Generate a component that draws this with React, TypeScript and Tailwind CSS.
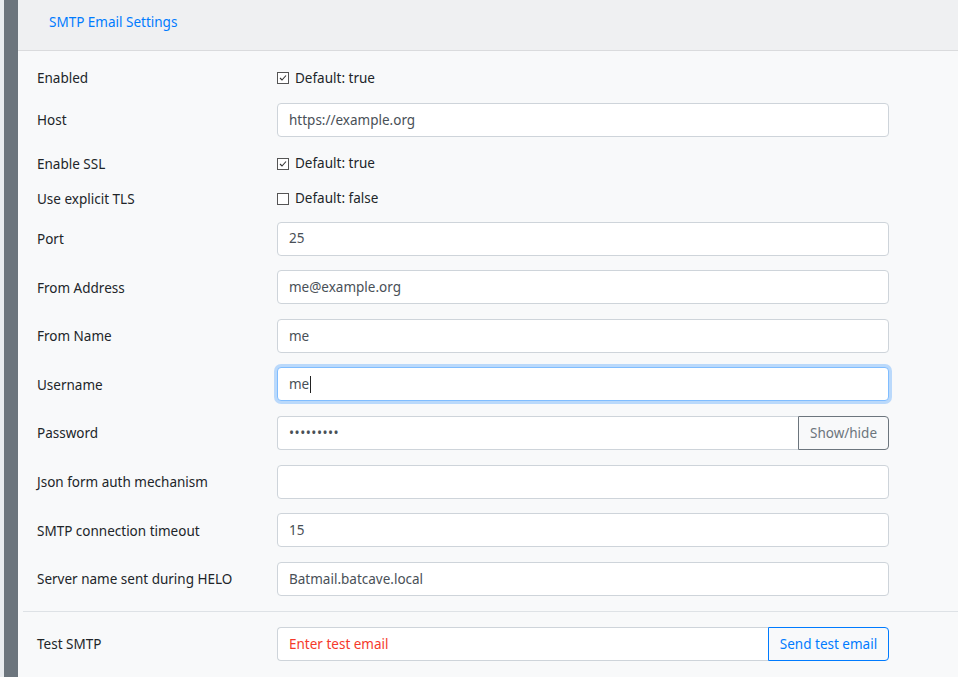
import React from "react";

const font = { fontFamily: '"Segoe UI", "Noto Sans", "Open Sans", sans-serif' };

function Check({ checked }: { checked: boolean }) {
  return (
    <span className="inline-flex h-[12px] w-[12px] items-center justify-center border border-[#555] bg-white">
      {checked && (
        <svg width="8" height="8" viewBox="0 0 8 8">
          <path d="M1 4 L3 6 L7 1.5" fill="none" stroke="#333" strokeWidth="1.1" />
        </svg>
      )}
    </span>
  );
}

function CheckRow({ label, checked, text, mb }: { label: string; checked: boolean; text: string; mb: string }) {
  return (
    <div className={`flex h-[24px] items-center ${mb}`}>
      <div className="w-[254px] pl-[14px] pt-[1px] text-[13.5px] text-[#212529]">{label}</div>
      <div className="flex items-center gap-[6px] text-[13.5px] text-[#212529]">
        <Check checked={checked} />
        <span>{text}</span>
      </div>
    </div>
  );
}

function InputRow({ label, value, focused }: { label: string; value: string; focused?: boolean }) {
  return (
    <div className="mb-[14.6px] flex h-[34px] items-center">
      <div className="w-[254px] pl-[14px] pt-[1px] text-[13.5px] text-[#212529]">{label}</div>
      <div
        className={`flex h-[34px] w-[612px] items-center rounded-[4px] border bg-white px-[11px] text-[13.5px] text-[#495057] ${
          focused ? "border-[#80bdff] shadow-[0_0_0_3px_rgba(0,123,255,0.25)]" : "border-[#ced4da]"
        }`}
      >
        <span>{value}</span>
        {focused && <span className="ml-[1px] inline-block h-[17px] w-[1px] bg-[#222]" />}
      </div>
    </div>
  );
}

export default function App() {
  return (
    <div className="flex h-[677px] w-[958px] overflow-hidden bg-[#f8f9fa]" style={font}>
      <div className="w-[4px] bg-[#e9ecef]" />
      <div className="w-[14px] bg-[#6c757d]" />
      <div className="flex flex-1 flex-col">
        <div className="h-[51px] border-b border-[#dadbdd] bg-[#eff0f2] pl-[31px] pt-[12px] text-[13.5px] leading-[20px] text-[#007bff]">
          SMTP Email Settings
        </div>
        <div className="pl-[5px] pt-[15px]">
          <CheckRow label="Enabled" checked text="Default: true" mb="mb-[13px]" />
          <InputRow label="Host" value="https://example.org" />
          <CheckRow label="Enable SSL" checked text="Default: true" mb="mb-[11px]" />
          <CheckRow label="Use explicit TLS" checked={false} text="Default: false" mb="mb-[11px]" />
          <InputRow label="Port" value="25" />
          <InputRow label="From Address" value="me@example.org" />
          <InputRow label="From Name" value="me" />
          <InputRow label="Username" value="me" focused />
          <div className="mb-[14.6px] flex h-[34px] items-center">
            <div className="w-[254px] pl-[14px] pt-[1px] text-[13.5px] text-[#212529]">Password</div>
            <div className="flex h-[34px] w-[612px]">
              <div className="flex flex-1 items-center rounded-l-[4px] border border-r-0 border-[#ced4da] bg-white px-[11px] text-[13.5px] tracking-[0.5px] text-[#495057]">
                •••••••••
              </div>
              <div className="flex w-[91px] items-center justify-center rounded-r-[4px] border border-[#6c757d] text-[13.5px] text-[#6c757d]">
                Show/hide
              </div>
            </div>
          </div>
          <InputRow label="Json form auth mechanism" value="" />
          <InputRow label="SMTP connection timeout" value="15" />
          <div className="flex h-[34px] items-center">
            <div className="w-[254px] pl-[14px] pt-[1px] text-[13.5px] text-[#212529]">Server name sent during HELO</div>
            <div className="flex h-[34px] w-[612px] items-center rounded-[4px] border border-[#ced4da] bg-white px-[11px] text-[13.5px] text-[#495057]">
              Batmail.batcave.local
            </div>
          </div>
          <div className="mb-[15px] mt-[15px] border-t border-[#dee2e6]" />
          <div className="flex h-[34px] items-center">
            <div className="w-[254px] pl-[14px] pt-[1px] text-[13.5px] text-[#212529]">Test SMTP</div>
            <div className="flex h-[34px] w-[612px]">
              <div className="flex flex-1 items-center rounded-l-[4px] border border-r-0 border-[#ced4da] bg-white px-[11px] text-[13.5px] text-[#f5392b]">
                Enter test email
              </div>
              <div className="flex w-[121px] items-center justify-center rounded-r-[4px] border border-[#007bff] text-[13.5px] text-[#007bff]">
                Send test email
              </div>
            </div>
          </div>
        </div>
      </div>
    </div>
  );
}
